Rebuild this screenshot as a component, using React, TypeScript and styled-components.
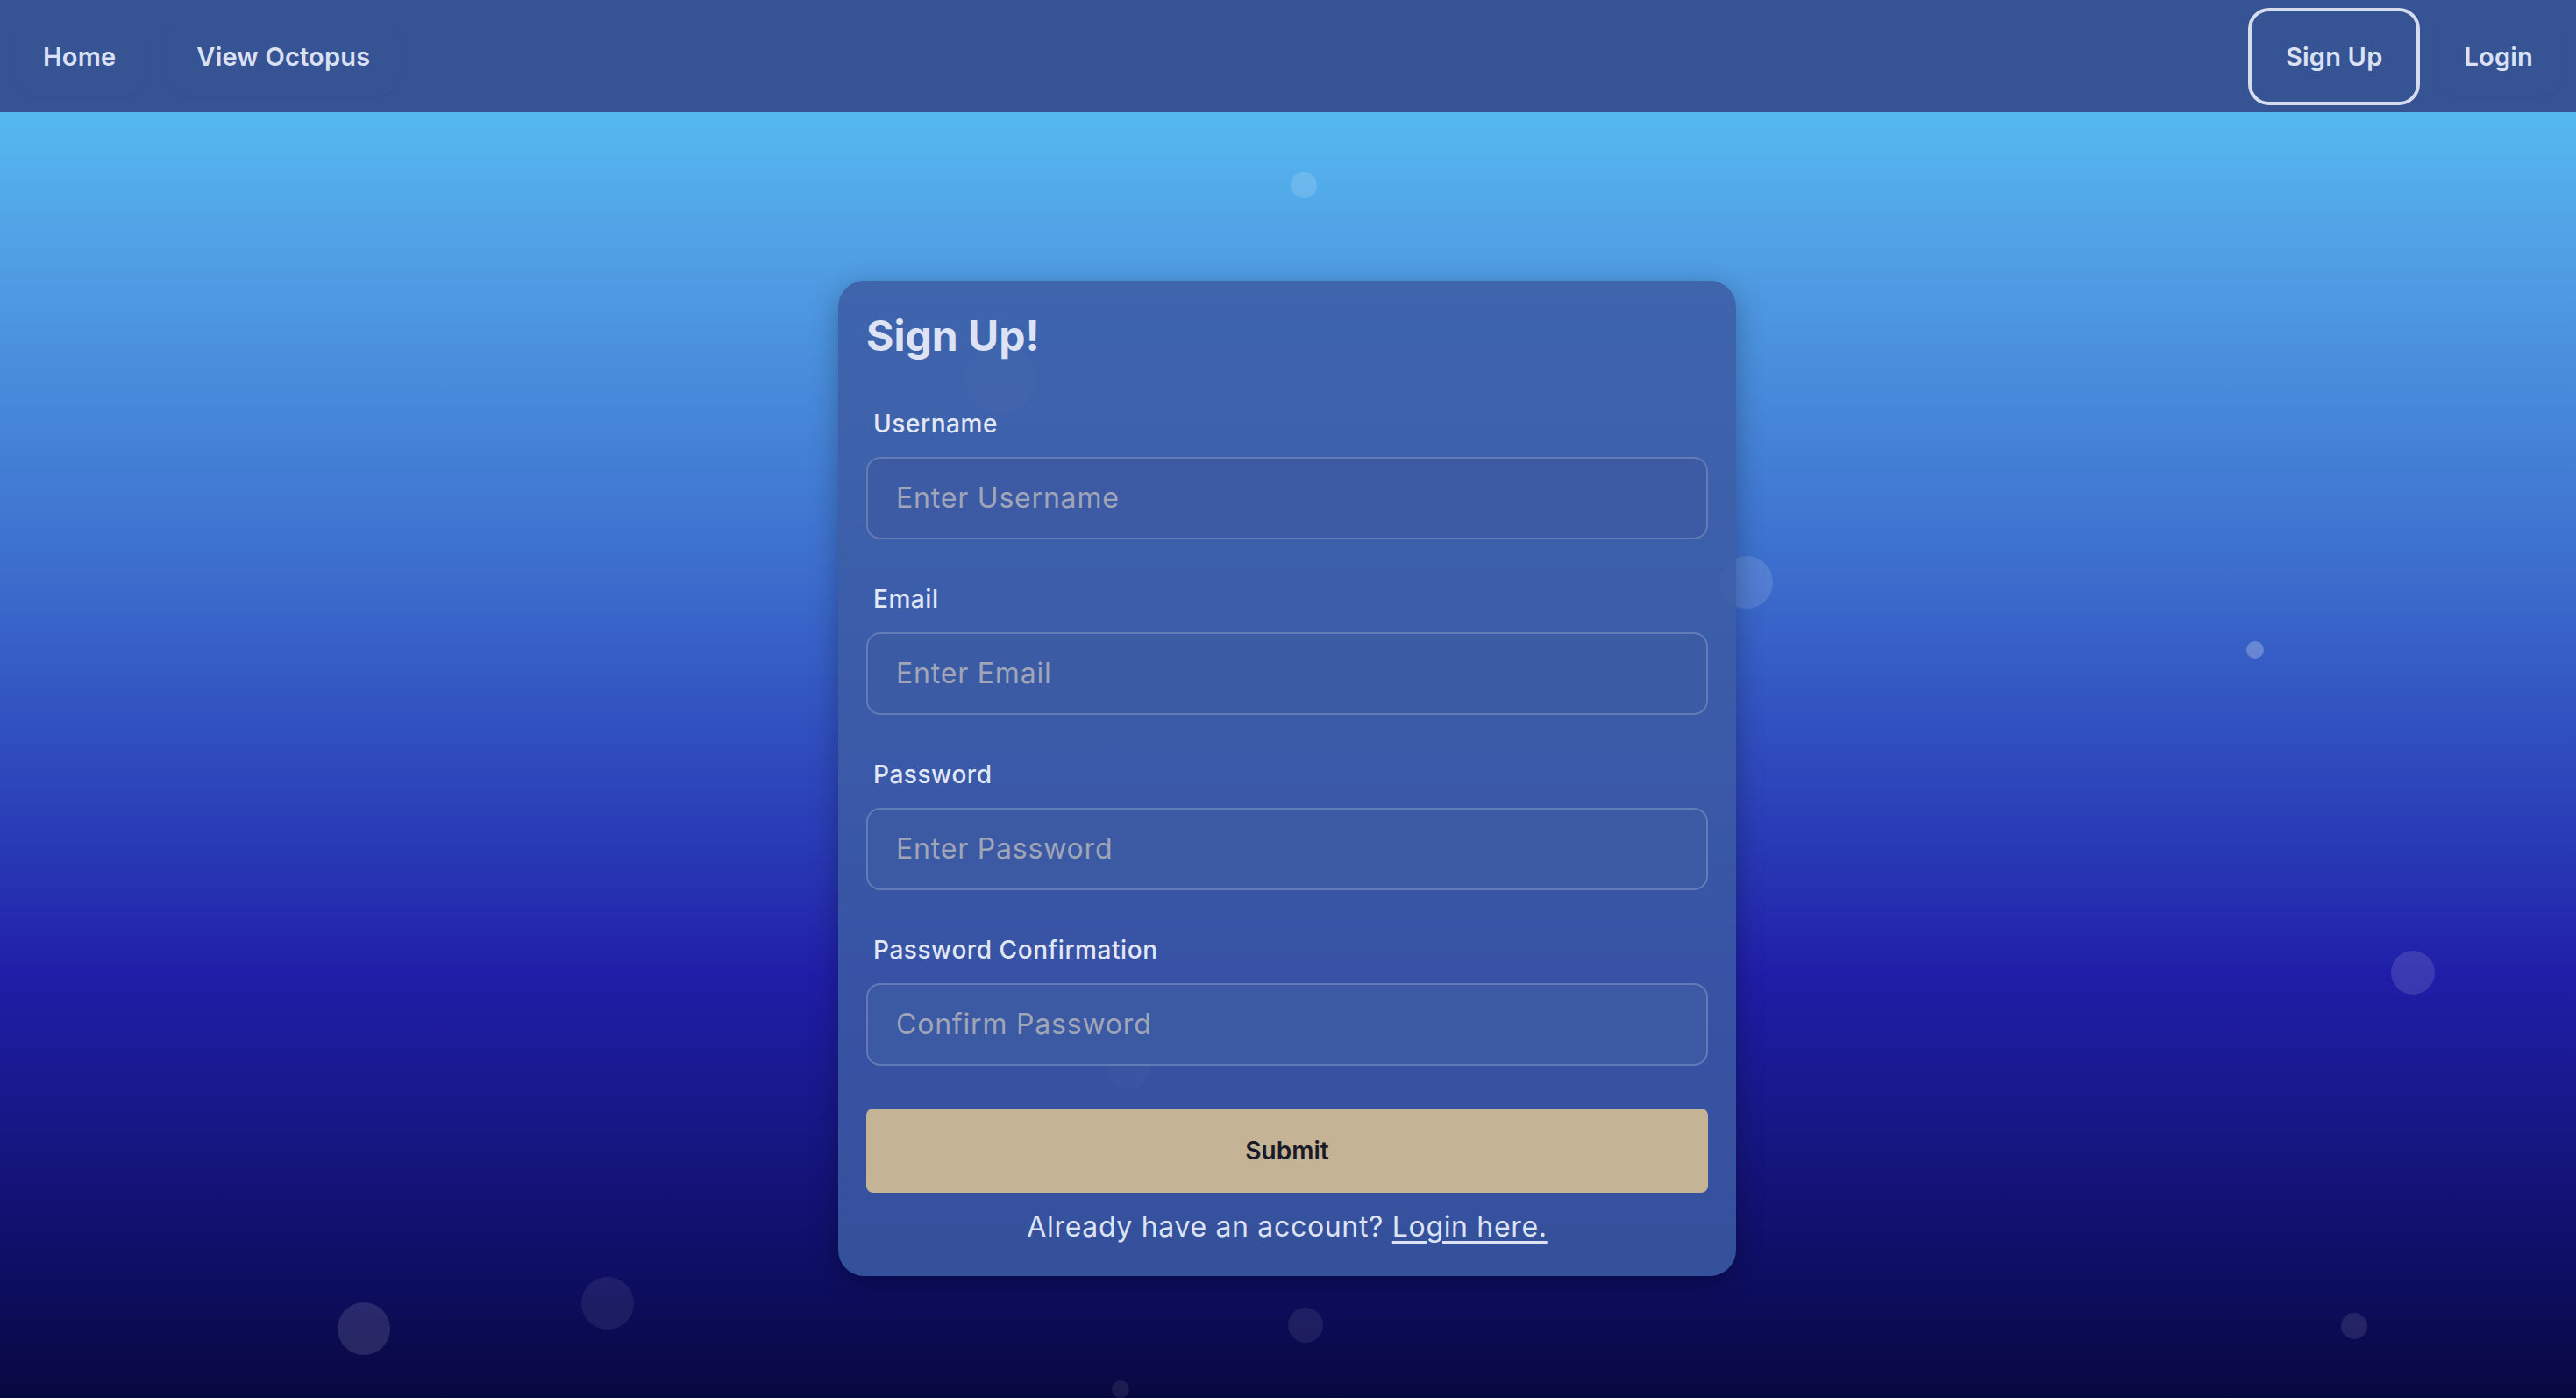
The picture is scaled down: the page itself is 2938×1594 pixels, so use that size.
import React from "react";
import styled, { createGlobalStyle } from "styled-components";

const GlobalStyle = createGlobalStyle`
  html, body {
    margin: 0;
    padding: 0;
  }
  body {
    font-family: "Inter", "Liberation Sans", sans-serif;
    background: #080840;
  }
  * { box-sizing: border-box; }
`;

const Page = styled.div`
  display: flex;
  flex-direction: column;
  min-height: 100vh;
`;

const NavBar = styled.nav`
  height: 128px;
  background: #365393;
  display: flex;
  align-items: center;
  justify-content: space-between;
  padding: 0 15px;
  position: relative;
  z-index: 2;
`;

const NavGroup = styled.div<{ $gap: number }>`
  display: flex;
  align-items: center;
  gap: ${(p) => p.$gap}px;
`;

const NavLink = styled.a<{ $active?: boolean }>`
  display: flex;
  align-items: center;
  justify-content: center;
  font-size: 29px;
  font-weight: 600;
  letter-spacing: 0.2px;
  color: #dbe1f4;
  text-decoration: none;
  border-radius: 24px;
  cursor: pointer;
  line-height: 35px;
  ${(p) =>
    p.$active
      ? `
    height: 111px;
    padding: 0 39px;
    border: 4px solid #d6dcef;
  `
      : `
    height: 89px;
    padding: 0 34px;
    box-shadow: 0 1px 3px rgba(0, 0, 0, 0.05);
  `}
`;

const Main = styled.main`
  flex: 1;
  position: relative;
  overflow: hidden;
  display: flex;
  flex-direction: column;
  align-items: center;
  background: linear-gradient(
    180deg,
    #55b9f0 0%,
    #509ee4 11.7%,
    #3c6ecd 35.6%,
    #2634b2 59.5%,
    #201ea8 67%,
    #161682 80%,
    #0e0e64 90%,
    #080840 100%
  );
`;

const Bubble = styled.span<{ $x: number; $y: number; $r: number; $a: number }>`
  position: absolute;
  left: ${(p) => p.$x - p.$r}px;
  top: ${(p) => p.$y - p.$r}px;
  width: ${(p) => p.$r * 2}px;
  height: ${(p) => p.$r * 2}px;
  border-radius: 50%;
  background: rgba(255, 255, 255, ${(p) => p.$a});
  z-index: 0;
`;

const Card = styled.section`
  position: relative;
  z-index: 1;
  width: 1024px;
  margin: 192px 2px 0 0;
  padding: 34px 32px 37px;
  border-radius: 30px;
  background: rgba(60, 92, 164, 0.86);
  box-shadow: 0 8px 32px rgba(0, 0, 0, 0.28);
  display: flex;
  flex-direction: column;
`;

const Title = styled.h1`
  margin: 0 0 55px;
  font-size: 48px;
  font-weight: 700;
  color: #dde3f5;
  line-height: 1.21;
`;

const Fields = styled.div`
  display: flex;
  flex-direction: column;
  gap: 52px;
`;

const Field = styled.div`
  display: flex;
  flex-direction: column;
  gap: 20px;
`;

const Label = styled.label`
  margin-left: 8px;
  font-size: 28px;
  font-weight: 500;
  letter-spacing: 0.55px;
  color: #e2e7f6;
  line-height: 1.21;
`;

const Input = styled.input`
  height: 94px;
  width: 100%;
  padding: 0 32px;
  border-radius: 16px;
  border: 2px solid rgba(255, 255, 255, 0.2);
  background: rgba(61, 91, 164, 0.9);
  font-family: "Inter", "Liberation Sans", sans-serif;
  font-size: 32px;
  letter-spacing: 0.8px;
  color: #e2e7f6;
  outline: none;
  &::placeholder {
    color: #a0a5b7;
  }
`;

const SubmitButton = styled.button`
  margin-top: 49px;
  height: 96px;
  width: 100%;
  border: none;
  border-radius: 8px;
  background: #c4b394;
  font-family: "Inter", "Liberation Sans", sans-serif;
  font-size: 28px;
  font-weight: 600;
  color: #1b1b28;
  cursor: pointer;
`;

const Footer = styled.p`
  margin: 20px 0 0;
  text-align: center;
  font-size: 32px;
  letter-spacing: 0.67px;
  color: #dde3f5;
  line-height: 1.21;
`;

const FooterLink = styled.a`
  color: #dde3f5;
  text-decoration: underline;
  text-underline-offset: 5px;
  text-decoration-thickness: 3px;
`;

const bubbles = [
  { x: 1487, y: 211, r: 15, a: 0.14 },
  { x: 1141, y: 432, r: 40, a: 0.12 },
  { x: 1992, y: 664, r: 30, a: 0.12 },
  { x: 2572, y: 741, r: 10, a: 0.25 },
  { x: 2752, y: 1109, r: 25, a: 0.12 },
  { x: 2685, y: 1512, r: 15, a: 0.1 },
  { x: 415, y: 1515, r: 30, a: 0.12 },
  { x: 693, y: 1486, r: 30, a: 0.07 },
  { x: 1489, y: 1511, r: 20, a: 0.08 },
  { x: 1278, y: 1584, r: 10, a: 0.08 },
  { x: 1287, y: 1218, r: 24, a: 0.1 },
];

const fields = [
  { id: "username", label: "Username", placeholder: "Enter Username", type: "text" },
  { id: "email", label: "Email", placeholder: "Enter Email", type: "email" },
  { id: "password", label: "Password", placeholder: "Enter Password", type: "password" },
  {
    id: "passwordConfirmation",
    label: "Password Confirmation",
    placeholder: "Confirm Password",
    type: "password",
  },
];

export default function App() {
  return (
    <>
      <GlobalStyle />
      <Page>
        <NavBar>
          <NavGroup $gap={24}>
            <NavLink>Home</NavLink>
            <NavLink>View Octopus</NavLink>
          </NavGroup>
          <NavGroup $gap={16}>
            <NavLink $active>Sign Up</NavLink>
            <NavLink>Login</NavLink>
          </NavGroup>
        </NavBar>
        <Main>
          {bubbles.map((b, i) => (
            <Bubble key={i} $x={b.x} $y={b.y - 128} $r={b.r} $a={b.a} />
          ))}
          <Card>
            <Title>Sign Up!</Title>
            <Fields>
              {fields.map((f) => (
                <Field key={f.id}>
                  <Label htmlFor={f.id}>{f.label}</Label>
                  <Input id={f.id} type={f.type} placeholder={f.placeholder} />
                </Field>
              ))}
            </Fields>
            <SubmitButton type="button">Submit</SubmitButton>
            <Footer>
              Already have an account? <FooterLink>Login here.</FooterLink>
            </Footer>
          </Card>
        </Main>
      </Page>
    </>
  );
}
